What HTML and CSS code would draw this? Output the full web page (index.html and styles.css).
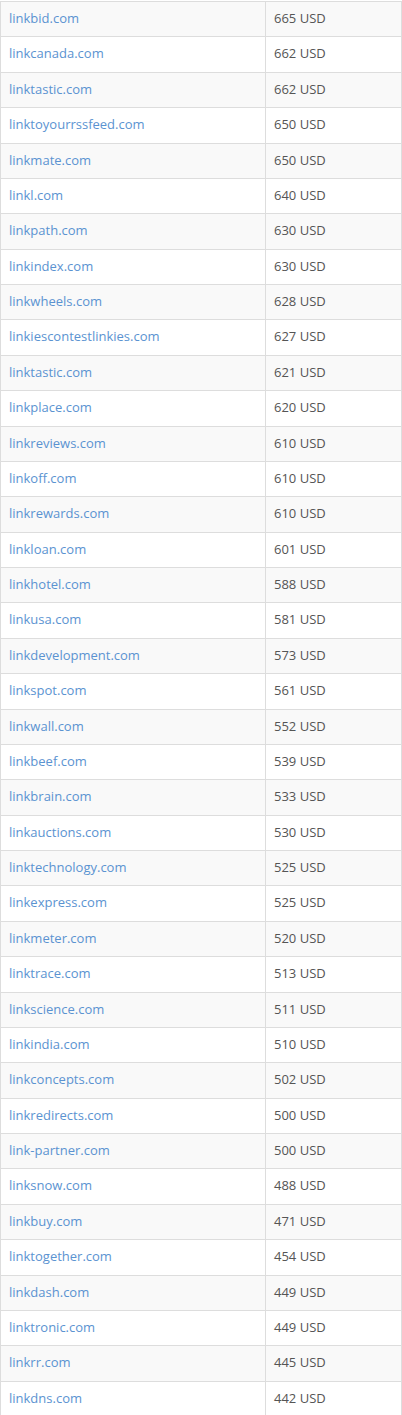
FILE: index.html
```html
<!DOCTYPE html>
<html lang="en">
<head>
<meta charset="utf-8">
<title>Domains</title>
<link rel="stylesheet" href="styles.css">
</head>
<body>
<table class="domains">
<tbody>
<tr><td><a href="#">linkbid.com</a></td><td>665 USD</td></tr>
<tr><td><a href="#">linkcanada.com</a></td><td>662 USD</td></tr>
<tr><td><a href="#">linktastic.com</a></td><td>662 USD</td></tr>
<tr><td><a href="#">linktoyourrssfeed.com</a></td><td>650 USD</td></tr>
<tr><td><a href="#">linkmate.com</a></td><td>650 USD</td></tr>
<tr><td><a href="#">linkl.com</a></td><td>640 USD</td></tr>
<tr><td><a href="#">linkpath.com</a></td><td>630 USD</td></tr>
<tr><td><a href="#">linkindex.com</a></td><td>630 USD</td></tr>
<tr><td><a href="#">linkwheels.com</a></td><td>628 USD</td></tr>
<tr><td><a href="#">linkiescontestlinkies.com</a></td><td>627 USD</td></tr>
<tr><td><a href="#">linktastic.com</a></td><td>621 USD</td></tr>
<tr><td><a href="#">linkplace.com</a></td><td>620 USD</td></tr>
<tr><td><a href="#">linkreviews.com</a></td><td>610 USD</td></tr>
<tr><td><a href="#">linkoff.com</a></td><td>610 USD</td></tr>
<tr><td><a href="#">linkrewards.com</a></td><td>610 USD</td></tr>
<tr><td><a href="#">linkloan.com</a></td><td>601 USD</td></tr>
<tr><td><a href="#">linkhotel.com</a></td><td>588 USD</td></tr>
<tr><td><a href="#">linkusa.com</a></td><td>581 USD</td></tr>
<tr><td><a href="#">linkdevelopment.com</a></td><td>573 USD</td></tr>
<tr><td><a href="#">linkspot.com</a></td><td>561 USD</td></tr>
<tr><td><a href="#">linkwall.com</a></td><td>552 USD</td></tr>
<tr><td><a href="#">linkbeef.com</a></td><td>539 USD</td></tr>
<tr><td><a href="#">linkbrain.com</a></td><td>533 USD</td></tr>
<tr><td><a href="#">linkauctions.com</a></td><td>530 USD</td></tr>
<tr><td><a href="#">linktechnology.com</a></td><td>525 USD</td></tr>
<tr><td><a href="#">linkexpress.com</a></td><td>525 USD</td></tr>
<tr><td><a href="#">linkmeter.com</a></td><td>520 USD</td></tr>
<tr><td><a href="#">linktrace.com</a></td><td>513 USD</td></tr>
<tr><td><a href="#">linkscience.com</a></td><td>511 USD</td></tr>
<tr><td><a href="#">linkindia.com</a></td><td>510 USD</td></tr>
<tr><td><a href="#">linkconcepts.com</a></td><td>502 USD</td></tr>
<tr><td><a href="#">linkredirects.com</a></td><td>500 USD</td></tr>
<tr><td><a href="#">link-partner.com</a></td><td>500 USD</td></tr>
<tr><td><a href="#">linksnow.com</a></td><td>488 USD</td></tr>
<tr><td><a href="#">linkbuy.com</a></td><td>471 USD</td></tr>
<tr><td><a href="#">linktogether.com</a></td><td>454 USD</td></tr>
<tr><td><a href="#">linkdash.com</a></td><td>449 USD</td></tr>
<tr><td><a href="#">linktronic.com</a></td><td>449 USD</td></tr>
<tr><td><a href="#">linkrr.com</a></td><td>445 USD</td></tr>
<tr><td><a href="#">linkdns.com</a></td><td>442 USD</td></tr>
</tbody>
</table>
</body>
</html>
```
FILE: styles.css
```css
html, body {
  margin: 0;
  padding: 0;
  background: #ffffff;
}
body {
  padding-top: 1px;
  font-family: "Open Sans", "Liberation Sans", Arial, sans-serif;
  font-size: 13px;
  color: #555555;
}
.domains {
  width: 402px;
  border-collapse: collapse;
  border-spacing: 0;
  table-layout: fixed;
  border: 1px solid #dddddd;
}
.domains td {
  padding: 7px 8px 9px;
  line-height: 18.38px;
  border: 1px solid #dddddd;
  text-align: left;
  vertical-align: top;
  white-space: nowrap;
}
.domains td:first-child {
  width: 248px;
}
.domains tr:nth-child(odd) td {
  background: #f9f9f9;
}
.domains a {
  color: #5b93d1;
  text-decoration: none;
}
```
